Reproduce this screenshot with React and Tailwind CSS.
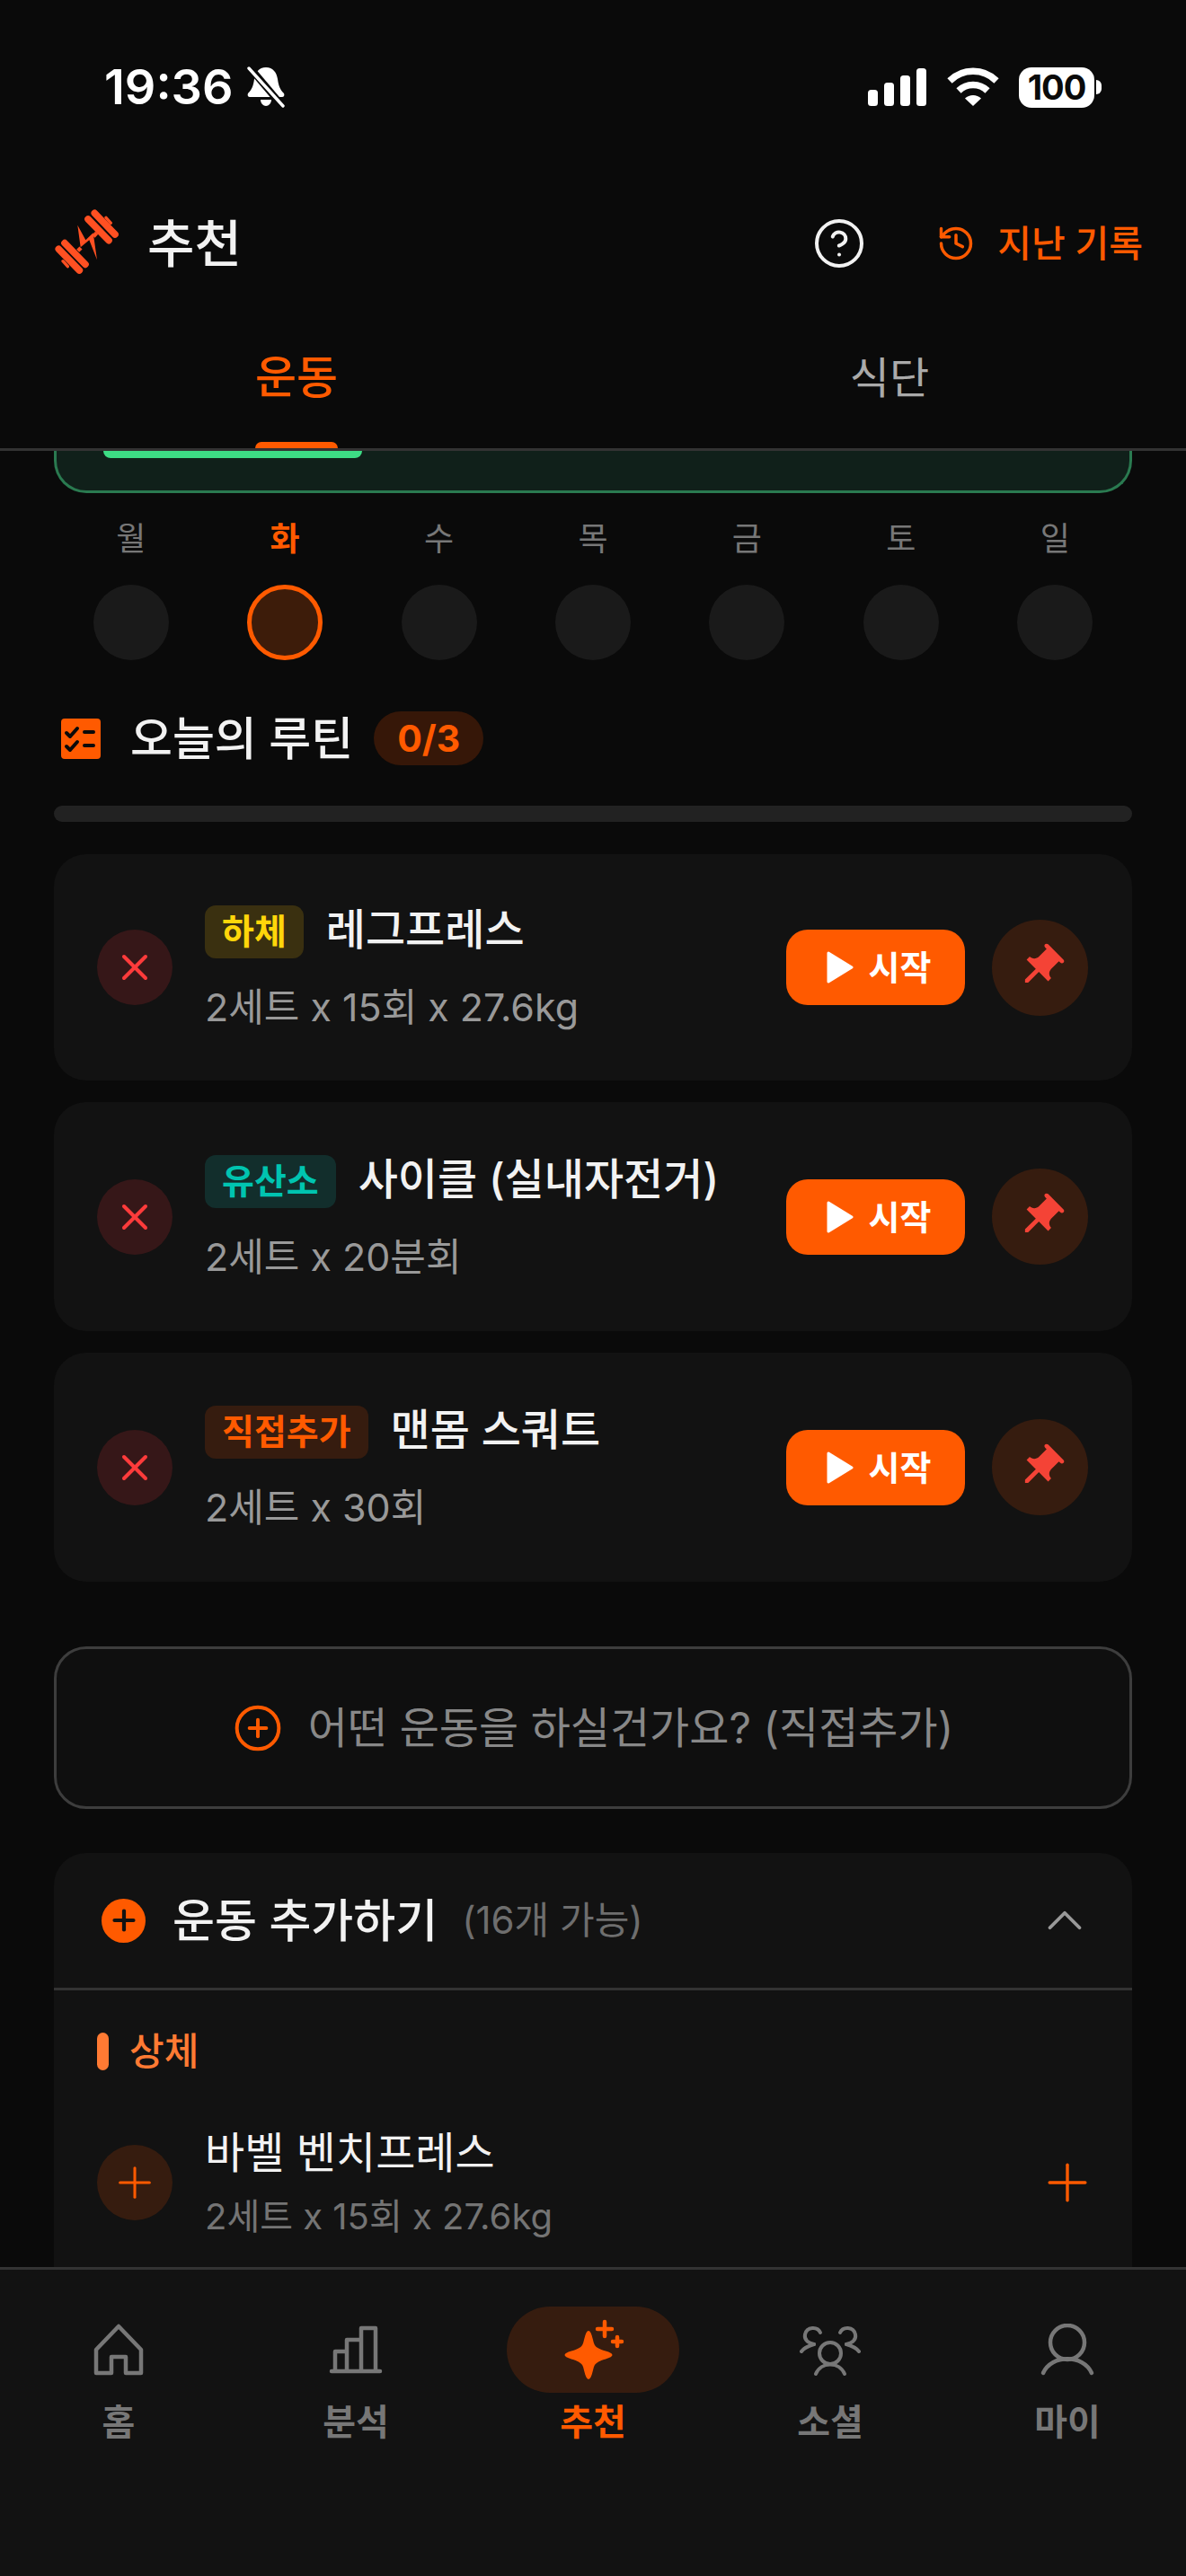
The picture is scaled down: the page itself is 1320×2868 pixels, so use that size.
import { ChevronUp, CircleHelp, CirclePlus, History, Plus, X } from 'lucide-react';
import { MdPushPin } from 'react-icons/md';

const days = ['월', '화', '수', '목', '금', '토', '일'];

const exercises = [
  { id: 1, height: 'h-[252px]', tag: '하체', tagClass: 'bg-[#3a3010] text-[#ffd60a]', name: '레그프레스', detail: '2세트 x 15회 x 27.6kg' },
  { id: 2, height: 'h-[255px]', tag: '유산소', tagClass: 'bg-[#122e2c] text-[#00c4b0]', name: '사이클 (실내자전거)', detail: '2세트 x 20분회' },
  { id: 3, height: 'h-[255px]', tag: '직접추가', tagClass: 'bg-[#361c0f] text-[#ff5a00]', name: '맨몸 스쿼트', detail: '2세트 x 30회' },
];

const Logo = () => (
  <svg width="120" height="100" viewBox="0 0 360 300" fill="none" stroke="#ff5022" strokeLinecap="round">
    <path d="M76 202 145 273M96 182 165 253M174 102 243 173M196 82 264 153" strokeWidth="23" />
    <path d="M90 242 106 260M234 97 250 115" strokeWidth="10" />
    <path d="M140 208 150 198M192 160 203 148" strokeWidth="13" strokeLinecap="butt" />
    <path d="M139 122 166 172 191 148 204 238 178 172 149 196Z" fill="#ff5022" stroke="none" />
  </svg>
);

const MutedBell = () => (
  <svg width="44" height="46" viewBox="0 0 44 46" fill="#fff">
    <path d="M22 1c-8 0-12 6-13 13-1 8-3 12-7 16-1 2 0 4 2 4h36c2 0 3-2 2-4-4-4-6-8-7-16C34 7 30 1 22 1z" />
    <path d="M16 37h12c0 4-3 7-6 7s-6-3-6-7z" />
    <path d="M3 0 42 46" stroke="#0a0a0a" strokeWidth="8" />
    <path d="M3 2 41 44" stroke="#fff" strokeWidth="3.4" strokeLinecap="round" />
  </svg>
);

const Signal = () => (
  <svg width="66" height="42" viewBox="0 0 66 42" fill="#fff">
    <rect x="0" y="24" width="11" height="18" rx="3.5" />
    <rect x="18" y="16" width="11" height="26" rx="3.5" />
    <rect x="36" y="8" width="11" height="34" rx="3.5" />
    <rect x="54" y="0" width="11" height="42" rx="3.5" />
  </svg>
);

const Wifi = () => (
  <svg width="58" height="44" viewBox="0 0 58 44" fill="none" stroke="#fff" strokeWidth="7.5">
    <path d="M3 15a37 37 0 0 1 52 0" />
    <path d="M13 26a23 23 0 0 1 32 0" />
    <path d="M29 43 20 34.5a13 13 0 0 1 18 0Z" fill="#fff" stroke="none" />
  </svg>
);

const Checklist = () => (
  <svg width="44" height="45" viewBox="0 0 44 45">
    <rect width="44" height="45" rx="4" fill="#ff5a00" />
    <g fill="none" stroke="#0a0a0a" strokeWidth="4" strokeLinecap="round" strokeLinejoin="round">
      <path d="M6 16 10 20 18 11M6 31 10 35 18 26" />
      <path d="M26 15H36M26 30H36" />
    </g>
  </svg>
);

const PlayIcon = () => (
  <svg width="30" height="36" viewBox="0 0 30 36" fill="#fff" stroke="#fff" strokeWidth="3" strokeLinejoin="round">
    <path d="M2 2 28 18 2 34Z" />
  </svg>
);

const HomeIcon = () => (
  <svg width="56" height="58" viewBox="0 0 56 58" fill="none" stroke="currentColor" strokeWidth="4.5" strokeLinejoin="round">
    <path d="M28 3 3 29V55H20V37H36V55H53V29Z" />
  </svg>
);

const BarsIcon = () => (
  <svg width="60" height="54" viewBox="0 0 60 54" fill="none" stroke="currentColor" strokeWidth="4.5" strokeLinecap="round" strokeLinejoin="round">
    <path d="M3 51H57M7 51V29H20V51M20 51V16H36V51M36 51V3H52V51" />
  </svg>
);

const SparkleIcon = () => (
  <svg width="72" height="72" viewBox="0 0 72 72" fill="#ff5a00">
    <path
      d="M31 16c2.500 0 3.500 8 5 13 1 4 3.500 6 9 8 5.500 2 11.500 3 11.500 5s-6 3-11.500 5c-5.500 2-8 4-9 8-1.500 5-2.500 13-5 13s-3.500-8-5-13c-1-4-3.500-6-9-8-5.500-2-11.500-3-11.500-5s6-3 11.500-5c5.500-2 8-4 9-8 1.500-5 2.500-13 5-13z"
      stroke="#ff5a00"
      strokeWidth="2"
      strokeLinejoin="round"
    />
    <path d="M41 13H57M49 5V21" stroke="#ff5a00" strokeWidth="4.500" strokeLinecap="round" />
    <path d="M58 27H68M63 22V32" stroke="#ff5a00" strokeWidth="4.500" strokeLinecap="round" />
  </svg>
);

const SocialIcon = () => (
  <svg width="68" height="58" viewBox="0 0 68 58" fill="none" stroke="currentColor" strokeWidth="4" strokeLinecap="round">
    <circle cx="34" cy="33" r="12" />
    <path d="M18 56C24 42 44 42 50 56" />
    <path d="M23 10C20 3 8 3 6 12 5 17 8 21 16 23" />
    <path d="M45 10C48 3 60 3 62 12 63 17 60 21 52 23" />
    <path d="M2 31C5 27 9 25 16 23M66 31C63 27 59 25 52 23" />
  </svg>
);

const PersonIcon = () => (
  <svg width="60" height="58" viewBox="0 0 60 58" fill="none" stroke="currentColor" strokeWidth="4.5" strokeLinecap="round">
    <circle cx="30" cy="21" r="19" />
    <path d="M3 55C12 34 48 34 57 55" />
  </svg>
);

const navItems = [
  { id: 'home', label: '홈', icon: HomeIcon },
  { id: 'stats', label: '분석', icon: BarsIcon },
  { id: 'recommend', label: '추천', icon: SparkleIcon, active: true },
  { id: 'social', label: '소셜', icon: SocialIcon },
  { id: 'my', label: '마이', icon: PersonIcon },
];

const App = () => {
  return (
    <div className="w-[1320px] h-[2868px] flex flex-col overflow-hidden bg-[#0a0a0a] text-white font-['Inter','Noto_Sans_CJK_KR',sans-serif]">
      {/* Status bar */}
      <div className="h-[180px] shrink-0 pt-[64px] pl-[116px] pr-[94px] flex items-start justify-between">
        <div className="h-[66px] flex items-center gap-[14px]">
          <span className="text-[54px] font-semibold leading-none">19:36</span>
          <MutedBell />
        </div>
        <div className="h-[66px] flex items-center gap-[22px]">
          <Signal />
          <Wifi />
          <div className="flex items-center gap-[2px]">
            <div className="w-[84px] h-[45px] rounded-[14px] bg-white text-[#0a0a0a] text-[38px] font-bold leading-none flex items-center justify-center tracking-[-1px]">100</div>
            <div className="w-[6px] h-[16px] rounded-r-full bg-white" />
          </div>
        </div>
      </div>

      {/* Title row */}
      <div className="h-[176px] shrink-0 pt-[6px] pl-[40px] pr-[48px] flex items-center">
        <div className="-mt-[22px]">
          <Logo />
        </div>
        <h1 className="ml-[4px] text-[57px] font-medium leading-none text-[#f2f2f2]">추천</h1>
        <CircleHelp size={60} strokeWidth={1.6} className="ml-auto text-[#f2f2f2]" />
        <div className="ml-[78px] flex items-center gap-[24px] text-[#ff5a00]">
          <History size={44} strokeWidth={1.9} />
          <span className="text-[41px] font-medium leading-none">지난 기록</span>
        </div>
      </div>

      {/* Tabs */}
      <div className="relative h-[146px] shrink-0 grid grid-cols-2 border-b-[3px] border-[#333333] pb-[14px]">
        <div className="flex items-center justify-center text-[50px] font-medium text-[#ff5a00]">운동</div>
        <div className="flex items-center justify-center text-[48px] text-[#aaaaaa]">식단</div>
        <div className="absolute left-[284px] bottom-0 w-[92px] h-[7px] rounded-t-[8px] bg-[#ff5a00]" />
      </div>

      {/* Scrolling content */}
      <main className="flex-1 min-h-0 overflow-hidden px-[60px]">
        <div className="h-[47px] rounded-b-[36px] border-x-[3px] border-b-[3px] border-[#2a7a50] bg-[#10201a]">
          <div className="ml-[52px] w-[288px] h-[8px] rounded-b-[16px] bg-[#3ddc84]" />
        </div>

        <div className="mt-[29px] grid grid-cols-7">
          {days.map((day, i) => (
            <div key={day} className="flex flex-col items-center gap-[29px]">
              <span className={`h-[44px] leading-[44px] text-[36px] ${i === 1 ? 'font-bold text-[#ff5a00]' : 'text-[#777777]'}`}>{day}</span>
              <div className={`w-[84px] h-[84px] rounded-full ${i === 1 ? 'border-[5px] border-[#ff5a00] bg-[#3d1c0a]' : 'bg-[#1a1a1a]'}`} />
            </div>
          ))}
        </div>

        {/* Today's routine */}
        <div className="mt-[57px] h-[60px] pl-[8px] flex items-center">
          <Checklist />
          <h2 className="ml-[33px] text-[51px] font-medium leading-none text-[#f2f2f2]">오늘의 루틴</h2>
          <span className="ml-[23px] h-[60px] px-[26px] rounded-full bg-[#361708] text-[#ff5a00] text-[41px] font-bold leading-[60px]">0/3</span>
        </div>
        <div className="mt-[45px] h-[18px] rounded-full bg-[#222222]" />

        <div className="mt-[36px] flex flex-col gap-[24px]">
          {exercises.map((item) => (
            <div key={item.id} className={`${item.height} rounded-[36px] bg-[#121212] pl-[48px] pr-[49px] flex items-center`}>
              <div className="w-[84px] h-[84px] shrink-0 rounded-full bg-[#361718] flex items-center justify-center text-[#ff3b3b]">
                <X size={48} strokeWidth={2} />
              </div>
              <div className="ml-[36px] flex-1 min-w-0 flex flex-col">
                <div className="h-[59px] flex items-center gap-[25px]">
                  <span className={`h-[59px] px-[19px] rounded-[12px] text-[39px] font-semibold leading-[57px] ${item.tagClass}`}>{item.tag}</span>
                  <span className="pb-[5px] text-[48px] font-medium leading-none text-[#f2f2f2] whitespace-nowrap">{item.name}</span>
                </div>
                <p className="mt-[29px] h-[50px] text-[43px] leading-[50px] text-[#999999] whitespace-nowrap">{item.detail}</p>
              </div>
              <button className="w-[199px] h-[84px] shrink-0 pl-[7px] rounded-[24px] bg-[#ff5a00] flex items-center justify-center gap-[17px]">
                <PlayIcon />
                <span className="text-[38px] font-bold leading-none">시작</span>
              </button>
              <div className="ml-[30px] w-[107px] h-[107px] shrink-0 rounded-full bg-[#361c0f] flex items-center justify-center text-[#f44336]">
                <MdPushPin size={58} className="rotate-45" />
              </div>
            </div>
          ))}
        </div>

        {/* Custom add */}
        <div className="mt-[72px] h-[181px] rounded-[36px] border-[3px] border-[#3d3d3d] bg-[#0f0f0f] flex items-center justify-center gap-[28px]">
          <CirclePlus size={56} strokeWidth={1.7} className="text-[#ff5a00]" />
          <span className="text-[48px] text-[#888888]">어떤 운동을 하실건가요? (직접추가)</span>
        </div>

        {/* Add exercise */}
        <section className="mt-[49px] rounded-t-[36px] bg-[#121212]">
          <div className="h-[153px] pl-[53px] pr-[42px] border-b-[3px] border-[#333333] flex items-center">
            <div className="w-[49px] h-[49px] rounded-full bg-[#ff5a00] flex items-center justify-center text-[#121212]">
              <Plus size={36} strokeWidth={2.8} />
            </div>
            <h3 className="ml-[30px] text-[51px] font-medium leading-none text-[#f2f2f2]">운동 추가하기</h3>
            <span className="ml-[27px] text-[42px] leading-none text-[#6e6e6e]">(16개 가능)</span>
            <ChevronUp size={66} strokeWidth={1.4} className="ml-auto text-[#999999]" />
          </div>
          <div className="pl-[48px] pr-[38px] pt-[46px] pb-[40px]">
            <div className="h-[44px] flex items-center gap-[23px]">
              <div className="w-[13px] h-[42px] rounded-full bg-[#ff7a33]" />
              <span className="text-[42px] font-medium leading-none text-[#ff7a33]">상체</span>
            </div>
            <div className="mt-[59px] h-[130px] flex items-center">
              <div className="w-[84px] h-[84px] shrink-0 rounded-full bg-[#361c0f] flex items-center justify-center text-[#ff5a00]">
                <Plus size={56} strokeWidth={1.3} />
              </div>
              <div className="ml-[36px] flex-1 flex flex-col gap-[20px]">
                <span className="text-[48px] leading-[56px] text-[#f2f2f2]">바벨 벤치프레스</span>
                <span className="text-[40px] leading-[46px] text-[#747474]">2세트 x 15회 x 27.6kg</span>
              </div>
              <Plus size={68} strokeWidth={1.2} className="text-[#ff5a00]" />
            </div>
          </div>
        </section>
      </main>

      {/* Bottom navigation */}
      <nav className="h-[344px] shrink-0 grid grid-cols-5 border-t-[3px] border-[#333333] bg-[#121212] pt-[41px]">
        {navItems.map((item) => {
          const Icon = item.icon;
          return (
            <div key={item.id} className={`flex flex-col items-center ${item.active ? 'text-[#ff5a00]' : 'text-[#777777]'}`}>
              <div className={`w-[192px] h-[96px] rounded-full flex items-center justify-center ${item.active ? 'bg-[#361c0f]' : ''}`}>
                <Icon />
              </div>
              <span className="mt-[12px] text-[40px] font-semibold leading-[42px]">{item.label}</span>
            </div>
          );
        })}
      </nav>
    </div>
  );
};

export default App;
